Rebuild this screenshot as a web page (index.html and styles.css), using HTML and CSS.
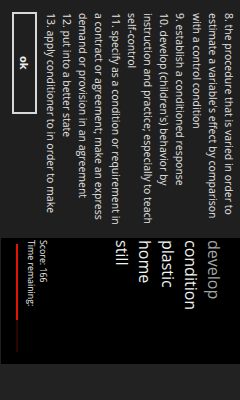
FILE: index.html
```html
<!DOCTYPE html>
<html>
<head>
<meta charset="utf-8">
<link rel="stylesheet" href="styles.css">
</head>
<body>
<div class="stage">
  <section class="panel">
    <div class="defs">
      <p>8. the procedure that is varied in order to estimate a variable's effect by comparison with a control condition</p>
      <p>9. establish a conditioned response</p>
      <p>10. develop (children's) behavior by instruction and practice; especially to teach self-control</p>
      <p>11. specify as a condition or requirement in a contract or agreement; make an express demand or provision in an agreement</p>
      <p>12. put into a better state</p>
      <p>13. apply conditioner to in order to make</p>
    </div>
    <button class="ok">ok</button>
  </section>
  <section class="game">
    <ul class="words">
      <li class="dim">develop</li>
      <li>condition</li>
      <li>plastic</li>
      <li>home</li>
      <li>still</li>
    </ul>
    <div class="info">
      <div class="line">Score: 166</div>
      <div class="line">Time remaining:</div>
      <div class="track"><div class="fill" style="inline-size:76px"></div></div>
    </div>
  </section>
  <aside class="tray"></aside>
</div>
</body>
</html>
```
FILE: styles.css
```css
html, body {
  margin: 0;
  padding: 0;
  background: #000;
}

.stage {
  width: 240px;
  height: 400px;
  writing-mode: vertical-rl;
  text-orientation: sideways;
  display: flex;
  font-family: "Open Sans", "Noto Sans", sans-serif;
  color: #ececec;
  overflow: hidden;
}

.panel {
  inline-size: 238px;
  block-size: 240px;
  flex: none;
  box-sizing: border-box;
  background: #1f1f1f;
  padding-block: 3px 12px;
  padding-inline: 12px 5px;
  display: flex;
  flex-direction: column;
}

.defs {
  font-size: 10.5px;
  line-height: 16.2px;
  color: #e4e4e4;
  padding-inline-start: 1px;
}

.defs p {
  margin: 0;
}

.ok {
  writing-mode: vertical-rl;
  text-orientation: sideways;
  margin-block-start: auto;
  inline-size: 102px;
  block-size: 25px;
  box-sizing: border-box;
  border: 2px solid #d8d8d8;
  background: transparent;
  color: #f0f0f0;
  font-family: "Open Sans", "Noto Sans", sans-serif;
  font-weight: 700;
  font-size: 11px;
  padding: 0;
  text-align: center;
}

.game {
  inline-size: 126px;
  block-size: 240px;
  flex: none;
  box-sizing: border-box;
  background: #000;
  border-block-end: 1px solid #1f1f1f;
  padding-block-start: 15px;
  padding-inline-start: 2px;
  display: flex;
  flex-direction: column;
}

.words {
  list-style: none;
  margin: 0;
  padding: 0;
  font-size: 16px;
  line-height: 23px;
  color: #f2f2f2;
}

.words .dim {
  color: #a4a4a4;
}

.info {
  margin-block-start: auto;
  padding-block-end: 14.5px;
  font-size: 8.8px;
  line-height: 12px;
  color: #e8e8e8;
}

.track {
  margin-block-start: 7px;
  margin-inline-start: 4px;
  inline-size: 108px;
  block-size: 2px;
  background: #2a0500;
}

.fill {
  block-size: 2px;
  background: #e51400;
}

.tray {
  inline-size: 36px;
  block-size: 240px;
  flex: none;
  background: #222;
}
```
